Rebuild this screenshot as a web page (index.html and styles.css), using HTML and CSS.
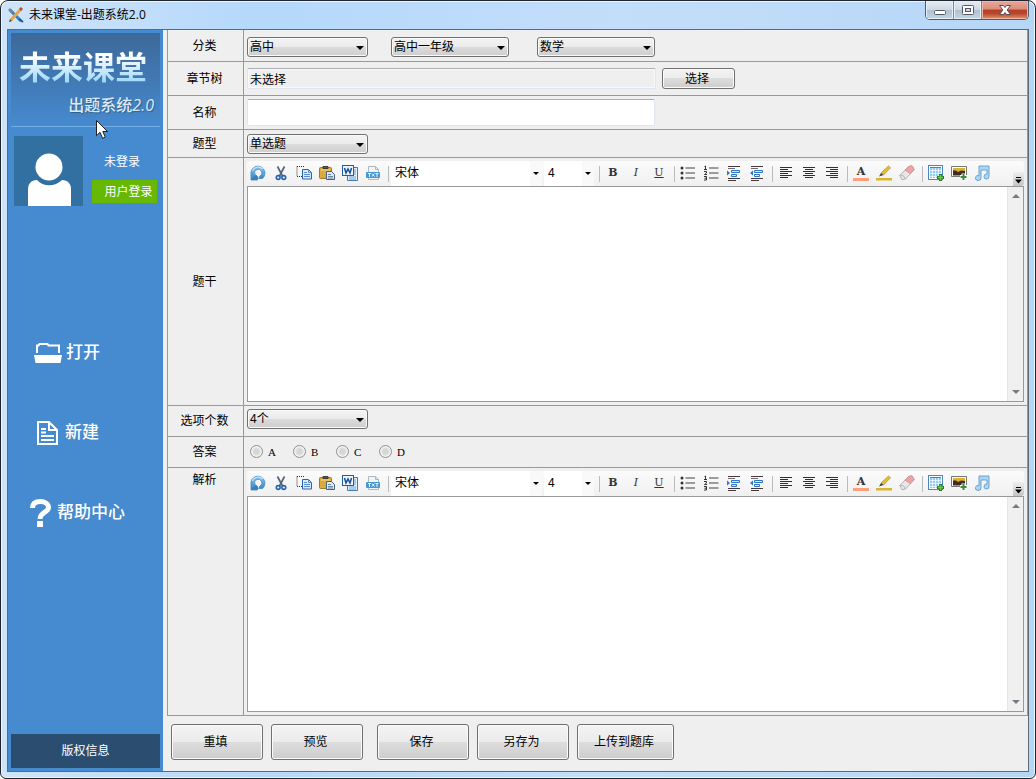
FILE: index.html
```html
<!DOCTYPE html>
<html lang="zh-CN">
<head>
<meta charset="utf-8">
<title>未来课堂-出题系统2.0</title>
<link rel="stylesheet" href="styles.css">
</head>
<body>
<svg class="sprite" aria-hidden="true">
  <defs>
    <linearGradient id="blue" x1="0" y1="0" x2="0" y2="1"><stop offset="0" stop-color="#8fc8ef"/><stop offset="1" stop-color="#2f7fc4"/></linearGradient>
  </defs>
  <symbol id="i-undo" viewBox="0 0 16 16"><path d="M1 9.500A7 7 0 1 1 12.500 13.500H8.500L10 11A3.600 3.600 0 1 0 5 9.500L7.500 11.500V15H1V9.500z" fill="url(#blue)" stroke="#4289c4" stroke-width=".8"/><path d="M2.500 6A6 6 0 0 1 12.500 4" fill="none" stroke="#c6e6fa" stroke-width="1.200"/><path d="M1 15l5-5 1.500 1.500V15z" fill="#3d7eb5"/></symbol>
  <symbol id="i-cut" viewBox="0 0 16 16"><path d="M4.500 1.500L9.500 11M11.500 1.500L6.500 11" stroke="#53677c" stroke-width="1.700" fill="none"/><circle cx="5.200" cy="12.500" r="1.900" fill="none" stroke="#2a62ae" stroke-width="1.600"/><circle cx="10.800" cy="12.500" r="1.900" fill="none" stroke="#2a62ae" stroke-width="1.600"/></symbol>
  <symbol id="i-copy" viewBox="0 0 16 16"><path d="M1 1.500h7M1 1.500v10h5" fill="none" stroke="#333" stroke-dasharray="1 1"/><path d="M6.500 4.500h6l3 3v6.500h-9z" fill="#d9eafb" stroke="#2d62a8"/><path d="M12.500 4.500v3h3M8 7.500h3M8 9.500h6M8 11.500h6" fill="none" stroke="#5b8fce"/></symbol>
  <symbol id="i-paste" viewBox="0 0 16 16"><rect x=".5" y="2.500" width="12" height="11" rx="1" fill="#dca93d" stroke="#a1772a"/><path d="M4 3.500V1.500h5v2z" fill="#665c4d" stroke="#3d3934"/><path d="M2 5h9" stroke="#f6d98e"/><path d="M7.500 6.500h5l3 3v5h-8z" fill="#dce8f4" stroke="#455f83"/><path d="M9 9.500h3M9 11.500h5M9 13h5" stroke="#6c88a7"/></symbol>
  <symbol id="i-word" viewBox="0 0 16 16"><path d="M5.500 2.500h10v13h-10z" fill="#e7f1fb" stroke="#417bb1"/><path d="M12 5h2M12 7h2M12 9h2M7 12h7M7 14h7" stroke="#6aa0d3"/><rect x=".5" y=".5" width="11" height="10" fill="#edf5fd" stroke="#225b9e"/><path d="M2.500 3l1.500 5 2-4 2 4 1.500-5" fill="none" stroke="#174c9a" stroke-width="1.500"/></symbol>
  <symbol id="i-txt" viewBox="0 0 16 16"><path d="M3.500 1.500h7l3 3v10h-10z" fill="#f1f3f5" stroke="#aeb8c1"/><path d="M10.500 1.500v3h3" fill="none" stroke="#aeb8c1"/><rect x="1" y="7" width="14" height="6" rx="1" fill="#4597d6"/><path d="M3 8.500h3M4.500 8.500V12M7 8.500l2.500 3M9.500 8.500L7 11.500M10.500 8.500h3M12 8.500V12" stroke="#e7f6ff" fill="none"/></symbol>
  <symbol id="i-ul" viewBox="0 0 16 16"><g fill="#333"><circle cx="2" cy="3" r="1.500"/><circle cx="2" cy="8" r="1.500"/><circle cx="2" cy="13" r="1.500"/></g><path d="M5.500 3H15M5.500 8H15M5.500 13H15" stroke="#493f43" stroke-width="1.200"/></symbol>
  <symbol id="i-ol" viewBox="0 0 16 16"><path d="M1.500 1.500L2.500 1v3.500M1 4.500h3M1 6.500h2.500v1.500L1.500 9.500H4M1 11.500h2.500v3.500H1M1.500 13.200h2" fill="none" stroke="#333"/><path d="M6 3h9.500M6 8h9.500M6 13h9.500" stroke="#493f43" stroke-width="1.200"/></symbol>
  <symbol id="i-indent" viewBox="0 0 16 16"><path d="M2 1.500h12M2 13.500h12M2 15.500h8" stroke="#46393b"/><path d="M2 3.500h7" stroke="#74686c"/><path d="M5.500 5.500h8v2h-8zM5.500 9.500h5v2h-5z" fill="#d2e9ff" stroke="#2d76cb"/><path d="M1 5.500L4 8 1 10.500z" fill="#2d76cb"/></symbol>
  <symbol id="i-outdent" viewBox="0 0 16 16"><path d="M2 1.500h12M2 13.500h12M2 15.500h8" stroke="#46393b"/><path d="M2 3.500h7" stroke="#74686c"/><path d="M5.500 5.500h8v2h-8zM5.500 9.500h5v2h-5z" fill="#d2e9ff" stroke="#2d76cb"/><path d="M4 5.500L1 8l3 2.500z" fill="#2d76cb"/></symbol>
  <symbol id="i-left" viewBox="0 0 16 16"><path d="M2 2.500h12M2 4.500h8M2 6.500h12M2 8.500h8M2 10.500h12M2 12.500h8" stroke="#332f31"/></symbol>
  <symbol id="i-center" viewBox="0 0 16 16"><path d="M2 2.500h12M4 4.500h8M2 6.500h12M4 8.500h8M2 10.500h12M4 12.500h8" stroke="#332f31"/></symbol>
  <symbol id="i-right" viewBox="0 0 16 16"><path d="M2 2.500h12M6 4.500h8M2 6.500h12M6 8.500h8M2 10.500h12M6 12.500h8" stroke="#332f31"/></symbol>
  <symbol id="i-mark" viewBox="0 0 16 16"><path d="M5 8L12.500 1l2 1.800L7.500 10z" fill="#e6bd31" stroke="#ae8925" stroke-width=".7"/><path d="M3 11.500L5 8l2.500 2z" fill="#444"/><path d="M0 13h16v2.500H0z" fill="#d8b631"/></symbol>
  <symbol id="i-erase" viewBox="0 0 16 16"><path d="M.8 10.500L9.500 1.500 13 .8l2.200 3.700L6.500 14l-3.500.8z" fill="#e7e7ea" stroke="#a8a1a5" stroke-width=".8"/><path d="M6 5.200L9.500 1.500 13 .8l2.200 3.700L11.500 8.800z" fill="#eca5a6" stroke="#c98587" stroke-width=".6"/><path d="M.8 10.500l3.700.3 2 3.200" fill="none" stroke="#aaa" stroke-width=".8"/></symbol>
  <symbol id="i-table" viewBox="0 0 16 16"><rect x=".5" y=".5" width="14" height="14" fill="#fff" stroke="#4b88b8"/><path d="M2 2h11v11H2z" fill="#8ecbf5"/><path d="M2 2.500h11" stroke="#408bc7"/><path d="M4.500 3v10M7.500 3v10M10.500 3v10M2 5.500h11M2 8.500h11M2 11.500h11" stroke="#fff" stroke-width=".7"/><path d="M12.500 9v7M9 12.500h7" stroke="#287b26" stroke-width="3"/><path d="M12.500 10v5M10 12.500h5" stroke="#6bca45" stroke-width="1.500"/></symbol>
  <symbol id="i-image" viewBox="0 0 16 16"><path d="M.5 1.500h15v10H.5z" fill="#fff" stroke="#777"/><path d="M2 3h12v4H2z" fill="#dbb231"/><path d="M2 5.500h3L7 7l3-1.500 4 .5v4.500H2z" fill="#402c25"/><path d="M12.500 8.500v7M9 12h7" stroke="#fff" stroke-width="4"/><path d="M12.500 9v6M9.500 12h6" stroke="#398d37" stroke-width="2"/></symbol>
  <symbol id="i-music" viewBox="0 0 16 16"><path d="M5 1h10v10.500a2.500 2.500 0 1 1-2-2.400V5H7v8a2.800 2.500 0 1 1-2-2.400z" fill="#afd5f1" stroke="#5f9dce" stroke-width=".9"/></symbol>
</svg>

<div class="window">
  <header class="titlebar">
    <svg class="app-icon" viewBox="0 0 16 16" aria-hidden="true"><path d="M2 3L13 14" stroke="#2d83cc" stroke-width="3"/><path d="M1 2l3 3" stroke="#7c8793" stroke-width="3"/><path d="M3 13L13 2" stroke="#e9a545" stroke-width="3"/><path d="M12 3l2-2" stroke="#c84a3e" stroke-width="3"/><path d="M1 15l1-3 2 2z" fill="#4b3f35"/><path d="M11 12l4 3" stroke="#1d5796" stroke-width="2"/></svg>
    <h1>未来课堂-出题系统2.0</h1>
    <div class="caption-buttons">
      <button type="button" aria-label="最小化"><svg viewBox="0 0 16 12"><rect x="2.500" y="6.500" width="11" height="4" rx="1" fill="#fff" stroke="#555a66"/></svg></button>
      <button type="button" aria-label="最大化"><svg viewBox="0 0 16 12"><rect x="2.500" y="1.500" width="11" height="9" rx="1" fill="#fff" stroke="#555a66"/><rect x="5.500" y="4.500" width="5" height="3" fill="#c7d5e4" stroke="#555a66"/></svg></button>
      <button type="button" class="close" aria-label="关闭"><svg viewBox="0 0 16 12"><path d="M2.500 1.500h4L8 3.500l1.500-2h4L10.200 6l3.300 4.500h-4L8 8.500l-1.500 2h-4L5.800 6z" fill="#fff" stroke="#5b4a55"/></svg></button>
    </div>
  </header>

  <div class="client">
    <aside class="sidebar">
      <div class="logo">
        <span class="logo-main">未来课堂</span>
        <span class="logo-sub">出题系统2.0</span>
      </div>
      <div class="user">
        <svg class="avatar" viewBox="0 0 69 70" aria-hidden="true"><path fill="#3170a0" d="M0 0h69v70H0z"/><circle cx="35" cy="31" r="13.500" fill="#fff"/><path d="M14 70V53c0-5 3-9 9-9 6 7 18 7 25 0 6 0 9 4 9 9v17z" fill="#fff"/></svg>
        <div class="user-info">
          <span>未登录</span>
          <button type="button" class="login">用户登录</button>
        </div>
      </div>
      <nav class="menu">
        <a href="#open" class="menu-open"><svg width="28" height="22" viewBox="0 0 28 22" aria-hidden="true"><path d="M3 11V3.500h1.500L5.500 2h8l1 1.500H25V11" fill="none" stroke="#fff" stroke-width="2"/><path d="M0 13h28l-1.500 8h-25z" fill="#fff"/></svg>打开</a>
        <a href="#new" class="menu-new"><svg width="21" height="24" viewBox="0 0 21 24" aria-hidden="true"><path d="M1 1h11l8 8v14H1z M12 1v8h8" fill="none" stroke="#fff" stroke-width="2"/><path d="M4 8h5M4 11.500h5M4 15h13M4 19h13" stroke="#fff" stroke-width="2"/></svg>新建</a>
        <a href="#help" class="menu-help"><svg width="21" height="28" viewBox="0 0 21 28" aria-hidden="true"><path d="M2.500 9C2.500 4 6 2.500 10.500 2.500S18.500 5 18.500 8.500C18.500 13.500 10 13 10 20" fill="none" stroke="#fff" stroke-width="5"/><path d="M7 22h6v6H7z" fill="#fff"/></svg>帮助中心</a>
      </nav>
      <button type="button" class="copyright">版权信息</button>
      <svg class="cursor" viewBox="0 0 12 19" aria-hidden="true"><path d="M.5.500v15.200l3.500-3.400 2.600 6 2.700-1.200-2.500-5.600h4.700z" fill="#fff" stroke="#222"/></svg>
    </aside>

    <main class="content">
      <form class="form">
        <div class="row row-category">
          <label class="label" for="stage">分类</label>
          <div class="field selects">
            <span class="select wide"><select id="stage"><option>高中</option></select></span>
            <span class="select"><select aria-label="年级"><option>高中一年级</option></select></span>
            <span class="select"><select aria-label="学科"><option>数学</option></select></span>
          </div>
        </div>
        <div class="row row-text">
          <label class="label" for="chapter">章节树</label>
          <div class="field"><input id="chapter" class="readonly" type="text" value="未选择" readonly><button type="button" class="btn pick">选择</button></div>
        </div>
        <div class="row row-text">
          <label class="label" for="name">名称</label>
          <div class="field"><input id="name" class="name" type="text"></div>
        </div>
        <div class="row row-type">
          <label class="label" for="type">题型</label>
          <div class="field"><span class="select wide"><select id="type"><option>单选题</option></select></span></div>
        </div>
        <div class="row row-editor">
          <label class="label" for="stem">题干</label>
          <div class="field editor">
            <div class="toolbar">
              <button type="button" aria-label="撤销"><svg><use href="#i-undo"/></svg></button>
              <button type="button" aria-label="剪切"><svg><use href="#i-cut"/></svg></button>
              <button type="button" aria-label="复制"><svg><use href="#i-copy"/></svg></button>
              <button type="button" aria-label="粘贴"><svg><use href="#i-paste"/></svg></button>
              <button type="button" aria-label="导入Word"><svg><use href="#i-word"/></svg></button>
              <button type="button" aria-label="导入文本"><svg><use href="#i-txt"/></svg></button>
              <i class="sep"></i>
              <span class="combo font"><select aria-label="字体"><option>宋体</option></select></span>
              <span class="combo size"><select aria-label="字号"><option>4</option></select></span>
              <i class="sep"></i>
              <button type="button" class="glyph bold">B</button>
              <button type="button" class="glyph italic">I</button>
              <button type="button" class="glyph underline">U</button>
              <i class="sep"></i>
              <button type="button" aria-label="项目符号"><svg><use href="#i-ul"/></svg></button>
              <button type="button" aria-label="编号"><svg><use href="#i-ol"/></svg></button>
              <button type="button" aria-label="增加缩进"><svg><use href="#i-indent"/></svg></button>
              <button type="button" aria-label="减少缩进"><svg><use href="#i-outdent"/></svg></button>
              <i class="sep"></i>
              <button type="button" aria-label="左对齐"><svg><use href="#i-left"/></svg></button>
              <button type="button" aria-label="居中"><svg><use href="#i-center"/></svg></button>
              <button type="button" aria-label="右对齐"><svg><use href="#i-right"/></svg></button>
              <i class="sep"></i>
              <button type="button" class="glyph color"><span>A</span></button>
              <button type="button" aria-label="突出显示"><svg><use href="#i-mark"/></svg></button>
              <button type="button" aria-label="清除格式"><svg><use href="#i-erase"/></svg></button>
              <i class="sep"></i>
              <button type="button" aria-label="插入表格"><svg><use href="#i-table"/></svg></button>
              <button type="button" aria-label="插入图片"><svg><use href="#i-image"/></svg></button>
              <button type="button" aria-label="插入音频"><svg><use href="#i-music"/></svg></button>
              <button type="button" class="more" aria-label="更多"><svg viewBox="0 0 11 14"><path d="M3 5.500h5" stroke="#000"/><path d="M2 7.500h7l-3.500 4z"/></svg></button>
            </div>
            <div class="paper"><textarea id="stem"></textarea><div class="scroll"><i class="up"></i><i class="down"></i></div></div>
          </div>
        </div>
        <div class="row row-short">
          <label class="label" for="count">选项个数</label>
          <div class="field count"><span class="select wide"><select id="count"><option>4个</option></select></span></div>
        </div>
        <div class="row row-short">
          <span class="label" id="answer-label">答案</span>
          <div class="field answers" role="radiogroup" aria-labelledby="answer-label">
            <label><input type="radio" name="answer">A</label>
            <label><input type="radio" name="answer">B</label>
            <label><input type="radio" name="answer">C</label>
            <label><input type="radio" name="answer">D</label>
          </div>
        </div>
        <div class="row row-editor">
          <label class="label top" for="analysis">解析</label>
          <div class="field editor">
            <div class="toolbar">
              <button type="button" aria-label="撤销"><svg><use href="#i-undo"/></svg></button>
              <button type="button" aria-label="剪切"><svg><use href="#i-cut"/></svg></button>
              <button type="button" aria-label="复制"><svg><use href="#i-copy"/></svg></button>
              <button type="button" aria-label="粘贴"><svg><use href="#i-paste"/></svg></button>
              <button type="button" aria-label="导入Word"><svg><use href="#i-word"/></svg></button>
              <button type="button" aria-label="导入文本"><svg><use href="#i-txt"/></svg></button>
              <i class="sep"></i>
              <span class="combo font"><select aria-label="字体"><option>宋体</option></select></span>
              <span class="combo size"><select aria-label="字号"><option>4</option></select></span>
              <i class="sep"></i>
              <button type="button" class="glyph bold">B</button>
              <button type="button" class="glyph italic">I</button>
              <button type="button" class="glyph underline">U</button>
              <i class="sep"></i>
              <button type="button" aria-label="项目符号"><svg><use href="#i-ul"/></svg></button>
              <button type="button" aria-label="编号"><svg><use href="#i-ol"/></svg></button>
              <button type="button" aria-label="增加缩进"><svg><use href="#i-indent"/></svg></button>
              <button type="button" aria-label="减少缩进"><svg><use href="#i-outdent"/></svg></button>
              <i class="sep"></i>
              <button type="button" aria-label="左对齐"><svg><use href="#i-left"/></svg></button>
              <button type="button" aria-label="居中"><svg><use href="#i-center"/></svg></button>
              <button type="button" aria-label="右对齐"><svg><use href="#i-right"/></svg></button>
              <i class="sep"></i>
              <button type="button" class="glyph color"><span>A</span></button>
              <button type="button" aria-label="突出显示"><svg><use href="#i-mark"/></svg></button>
              <button type="button" aria-label="清除格式"><svg><use href="#i-erase"/></svg></button>
              <i class="sep"></i>
              <button type="button" aria-label="插入表格"><svg><use href="#i-table"/></svg></button>
              <button type="button" aria-label="插入图片"><svg><use href="#i-image"/></svg></button>
              <button type="button" aria-label="插入音频"><svg><use href="#i-music"/></svg></button>
              <button type="button" class="more" aria-label="更多"><svg viewBox="0 0 11 14"><path d="M3 5.500h5" stroke="#000"/><path d="M2 7.500h7l-3.500 4z"/></svg></button>
            </div>
            <div class="paper"><textarea id="analysis"></textarea><div class="scroll"><i class="up"></i><i class="down"></i></div></div>
          </div>
        </div>
      </form>
      <footer class="actions">
        <button type="button" class="btn">重填</button>
        <button type="button" class="btn">预览</button>
        <button type="button" class="btn save">保存</button>
        <button type="button" class="btn">另存为</button>
        <button type="button" class="btn upload">上传到题库</button>
      </footer>
    </main>
  </div>
</div>
</body>
</html>
```
FILE: styles.css
```css
* { box-sizing: border-box; }

body {
  margin: 0;
  background: #fff;
  color: #000;
  font: 12px/16px "Liberation Sans", "Noto Sans CJK SC", sans-serif;
}

button, input, select, textarea { margin: 0; padding: 0; font: inherit; color: inherit; }
.sprite { position: absolute; width: 0; height: 0; }

/* window frame */
.window {
  display: flex;
  flex-direction: column;
  height: 100vh;
  padding: 0 6px 6px;
  border: 1px solid #20262e;
  border-radius: 8px 8px 6px 6px;
  background: linear-gradient(90deg, #cfe4f8, #b5d8fb 25%, #c3defa 60%, #b6d6f6);
  box-shadow: inset 0 0 0 1px #eaf5ff;
}
.titlebar { display: flex; flex: none; height: 28px; padding-left: 1px; align-items: center; }
.app-icon { width: 16px; height: 16px; }
.titlebar h1 { flex: 1; margin: 0 0 0 5px; font-family: "Open Sans", "Noto Sans CJK SC", sans-serif; font-size: 12px; font-weight: 400; }
.caption-buttons {
  display: flex;
  align-self: flex-start;
  border: 1px solid #505b6b;
  border-top: 0;
  border-radius: 0 0 5px 5px;
  overflow: hidden;
}
.caption-buttons button {
  width: 28px;
  height: 18px;
  border: 0;
  border-right: 1px solid #7d8a9a;
  background: linear-gradient(#e4ebf3, #ced8e3 50%, #aebfce 50%, #c6d6e4);
  box-shadow: inset 0 0 0 1px #e6eef6;
}
.caption-buttons .close {
  width: 46px;
  border-right: 0;
  background: linear-gradient(#e9a7a2, #dd8d75 45%, #b2402a 50%, #b8482c 70%, #e59568);
  box-shadow: inset 0 0 0 1px #e8b5a6;
}
.caption-buttons svg { display: block; width: 16px; height: 12px; margin: 0 auto; }
.client {
  display: flex;
  flex: 1;
  min-height: 0;
  border: 1px solid #5b6b7a;
  background: #efefef;
}

/* sidebar */
.sidebar {
  position: relative;
  display: flex;
  flex: none;
  flex-direction: column;
  width: 155px;
  padding: 3px;
  background: #468acf;
  color: #fff;
}
.logo {
  display: flex;
  flex-direction: column;
  height: 94px;
  padding: 12px 6px 0 8px;
  border-bottom: 1px solid #74aee6;
  background: linear-gradient(#3d6899, #4179b4 50%, #468acf);
  font-family: "Open Sans", "Noto Sans CJK SC", sans-serif;
  font-style: oblique 8deg;
}
.logo-main {
  background: linear-gradient(#fff 25%, #a4dbfb 80%);
  -webkit-background-clip: text;
  background-clip: text;
  color: transparent;
  font-size: 32px;
  font-weight: 700;
  line-height: 44px;
  white-space: nowrap;
}
.logo-sub { align-self: flex-end; color: #dfe9f3; font-size: 16px; font-weight: 500; line-height: 32px; text-shadow: 1px 1px 1px #2e5c8b; }
.user { display: flex; gap: 9px; padding: 9px 0 0 3px; }
.avatar { flex: none; width: 69px; height: 70px; }
.user-info { display: flex; flex: 1; flex-direction: column; gap: 10px; padding-top: 18px; }
.user-info span { padding-left: 12px; }
.login { width: 65px; height: 23px; border: 0; padding-left: 8px; background: #66b900; white-space: nowrap; }
.menu { display: flex; flex: 1; flex-direction: column; gap: 40px; padding-top: 127px; }
.menu a {
  display: flex;
  align-items: center;
  height: 40px;
  color: #fff;
  font-size: 17px;
  font-weight: 500;
  text-decoration: none;
}
.menu-open { gap: 4px; padding-left: 23px; }
.menu-new { gap: 7px; padding-left: 26px; }
.menu-help { gap: 6px; padding-left: 19px; }
.copyright { height: 34px; border: 0; background: #2b4e70; }
.cursor { position: absolute; left: 88px; top: 90px; width: 12px; height: 19px; }

/* form grid */
.content { display: flex; flex: 1; flex-direction: column; min-width: 0; padding-left: 4px; }
.form { display: flex; flex: 1; flex-direction: column; min-height: 0; border: solid #999; border-width: 0 1px; }
.row { display: flex; flex: none; border-bottom: 1px solid #999; }
.row-category { height: 32px; }
.row-text { height: 34px; }
.row-type { height: 28px; }
.row-short { height: 31px; }
.row-editor { flex: 1; min-height: 0; }
.label { display: flex; flex: none; align-items: center; justify-content: center; width: 76px; padding-right: 2px; border-right: 1px solid #999; }
.label.top { align-items: flex-start; padding-top: 4px; }
.field { display: flex; flex: 1; align-items: center; min-width: 0; padding: 0 3px; }

.select { position: relative; width: 118px; height: 20px; }
.select.wide { width: 121px; }
.selects { gap: 28px; padding-top: 2px; }
.selects .wide { margin-right: -5px; }
.count { align-items: flex-start; padding-top: 3px; }
.select select {
  display: block;
  width: 100%;
  height: 20px;
  padding: 0 2px;
  appearance: none;
  border: 1px solid #707070;
  border-radius: 3px;
  background: linear-gradient(#f3f3f3, #ebebeb 50%, #dcdcdc 50%, #cecece);
  box-shadow: inset 0 0 0 1px #fafafa;
  line-height: 18px;
}
.select::after, .combo::after {
  content: "";
  position: absolute;
  right: 4px;
  top: 9px;
  border: solid transparent;
  border-width: 4px 4px 0;
  border-top-color: #000;
  pointer-events: none;
}
.field input[type="text"] { width: 408px; height: 27px; padding: 0 2px; border: 1px solid #dfe5ef; border-top-color: #abadb3; border-radius: 2px; background: #fff; }
.field input.readonly { width: 409px; height: 21px; background: #efefef; box-shadow: inset 0 0 0 1px #fafafa; }
.btn {
  height: 36px;
  padding-right: 3px;
  border: 1px solid #707070;
  border-radius: 3px;
  background: linear-gradient(#f3f3f3, #ebebeb 50%, #dddddd 50%, #cdcdcd);
  box-shadow: inset 0 0 0 1px #fafafa;
}
.pick { width: 73px; height: 21px; margin-left: 6px; }
.answers { gap: 18px; padding-bottom: 1px; }
.answers label { display: flex; align-items: center; gap: 5px; width: 25px; font: 11px/16px "Liberation Serif", serif; }
.answers input {
  flex: none;
  width: 13px;
  height: 13px;
  margin-left: 3px;
  appearance: none;
  border: 1px solid #8e8f8f;
  border-radius: 50%;
  background: radial-gradient(#d4d6d8 30%, #f0f0f0 65%);
  box-shadow: inset 0 0 0 1px #f4f4f4;
}

/* editors */
.editor { flex-direction: column; align-items: stretch; padding: 3px; }
.toolbar {
  display: flex;
  flex: none;
  height: 25px;
  align-items: center;
  border-radius: 3px 3px 0 0;
  background: linear-gradient(#fbfbfb, #f0f0f0);
}
.toolbar button { flex: none; width: 23px; height: 24px; padding: 0 1px 2px 0; border: 0; background: none; }
.toolbar button svg { display: block; width: 16px; height: 16px; margin: 0 auto; }
.sep { flex: none; width: 1px; height: 16px; margin: 0 2px 0 3px; background: #bbb; }
.combo { position: relative; height: 25px; border-right: 12px solid #f9f9f9; background: #fff; font-size: 12px; }
.combo select { width: 100%; height: 24px; padding-left: 4px; appearance: none; border: 0; background: #fff; line-height: 24px; }
.combo::after { right: -9px; top: 11px; border-width: 3px 3px 0; }
.combo.font { width: 151px; margin-right: 2px; }
.combo.size { width: 50px; margin-right: 2px; }
.toolbar .glyph { color: #333; font: 11px/22px "DejaVu Serif", serif; }
.toolbar .bold { font-weight: 700; }
.toolbar .italic { font-style: italic; }
.toolbar .underline { text-decoration: underline; }
.toolbar .color { font-weight: 700; }
.color span { display: block; width: 16px; height: 16px; margin: 0 auto; border-bottom: 3px solid #ffa07a; line-height: 14px; }
.toolbar .more { align-self: flex-end; width: 11px; height: 14px; margin-left: auto; padding: 0; border-radius: 0 0 3px; background: linear-gradient(#eee, #c4c4c4); }
.toolbar .more svg { width: 11px; height: 14px; }
.paper { display: flex; flex: 1; min-height: 0; border: 1px solid #999; background: #fff; }
.paper textarea { flex: 1; min-width: 0; border: 0; resize: none; background: #fff; outline: 0; }
.scroll { display: flex; flex-direction: column; justify-content: space-between; align-items: center; width: 16px; padding: 7px 0; background: #f0f0f0; border-left: 1px solid #e5e5e5; }
.up, .down { border: solid transparent; border-width: 0 4px 4px; border-bottom-color: #777b84; }
.down { border-width: 4px 4px 0; border-top-color: #777b84; }

.actions { display: flex; flex: none; gap: 8px; height: 55px; padding: 8px 4px; }
.actions .btn { width: 92px; }
.actions .save { margin-left: 6px; }
.actions .upload { width: 97px; }
```
